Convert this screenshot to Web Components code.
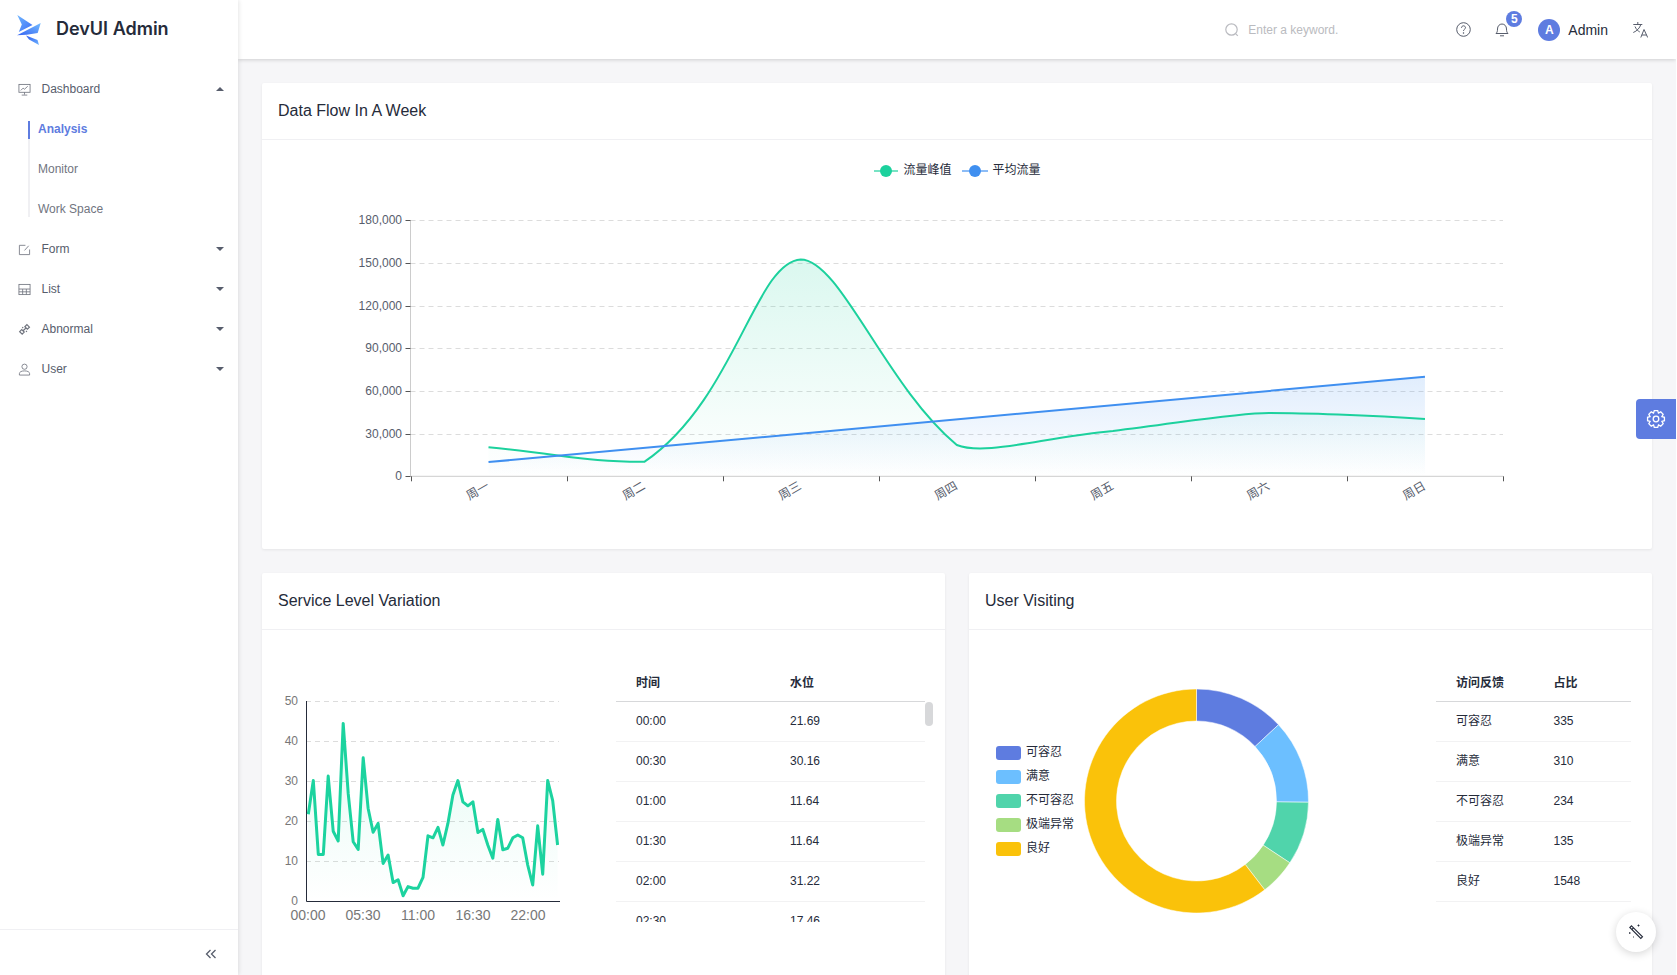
<!DOCTYPE html>
<html lang="en">
<head>
<meta charset="utf-8">
<title>DevUI Admin</title>
<style>
  html, body { margin: 0; height: 100%; overflow: hidden; background: #fff; }
  body { font-family: "Liberation Sans", "Noto Sans CJK SC", sans-serif; font-size: 12px; color: #252b3a; }
</style>
</head>
<body>
<admin-layout>
  <admin-sidebar slot="sidebar"></admin-sidebar>
  <admin-header slot="header"></admin-header>
  <dash-card title="Data Flow In A Week" wide><flow-chart></flow-chart></dash-card>
  <dash-card title="Service Level Variation">
    <level-chart></level-chart>
    <data-table id="level-table" columns="时间,水位" scroll style="width:317px;margin-top:32px"></data-table>
  </dash-card>
  <dash-card title="User Visiting">
    <visit-chart></visit-chart>
    <data-table columns="访问反馈,占比" rows="可容忍|335;满意|310;不可容忍|234;极端异常|135;良好|1548" style="width:195px;margin-top:32px"></data-table>
  </dash-card>
</admin-layout>
<settings-tab></settings-tab>
<magic-fab></magic-fab>

<script>
const ICONS = {
  dashboard: '<rect x="1" y="1.5" width="12" height="8.5" /><path d="M3 8l2.5-2.5 1.5 1.2L10.5 3.5M7 10v2.5M4 13h6"/>',
  form: '<path d="M12.5 7v5.5h-11v-10H8"/><path d="M7 8l4.5-5" />',
  list: '<rect x="1" y="1.5" width="12" height="11"/><path d="M1 6.5h12M1 9.500h12M5 6.500v6M9 6.500v6"/>',
  abnormal: '<path stroke-width="1.300" d="M1.800 9.300l2.200-2.200 2.700 2.700-2.200 2.200zM7.400 4l2.200-2.200 2.700 2.700-2.200 2.200zM5.500 8.300l2.800-2.600M4.600 4.400l1 1M8.600 8.600l1 1"/>',
  user: '<circle cx="7" cy="4" r="2.800"/><path d="M1.500 13v-1.500c0-1.800 2-3 5.500-3s5.500 1.200 5.500 3V13z"/>'
};

const LEVELS = [21.69,30.16,11.64,11.64,31.22,17.46,15,44.4,26.9,14.8,12.9,35.8,23.2,17.2,19.4,9.4,11.5,4.6,5.3,1.3,3.6,3.2,3.2,5.9,16.3,15.8,18.4,14,19.4,26.5,30.1,24.8,23.8,24.8,17.1,17.9,14,10.7,20.4,12.8,13.2,15.8,16.5,15.8,9,4,18.8,6.7,30.1,25.1,14];

const layoutTpl = document.createElement('template');
layoutTpl.innerHTML = `
  <style>
    :host { display: grid; grid-template-columns: 238px 1fr; grid-template-rows: 59px 1fr; width: 1676px; height: 100vh; background: #f6f6f8; overflow: hidden; }
    ::slotted([slot=sidebar]) { grid-row: 1 / 3; z-index: 2; }
    .main { display: grid; grid-template-columns: 1fr 1fr; gap: 24px; padding: 24px; align-content: start; overflow: hidden; min-height: 0; }
  </style>
  <slot name="sidebar"></slot>
  <slot name="header"></slot>
  <div class="main"><slot></slot></div>`;
class AdminLayout extends HTMLElement {
  constructor() {
    super();
    this.attachShadow({mode: 'open'});
    this.shadowRoot.appendChild(layoutTpl.content.cloneNode(true));
  }
}

const sidebarTpl = document.createElement('template');
sidebarTpl.innerHTML = `
  <style>
    :host { display: flex; flex-direction: column; background: #fff; box-shadow: 1px 0 4px rgba(0,0,0,.1); height: 100vh; }
    .brand { display: flex; align-items: center; height: 59px; padding-left: 17px; font-family: Inter, "Liberation Sans", sans-serif; font-size: 18px; font-weight: 600; color: #252b3a; }
    .brand svg { margin-right: 15px; }
    .brand span { margin-top: -2px; }
    nav { flex: 1; padding-top: 10px; }
    .row { display: flex; align-items: center; height: 40px; padding: 0 14px 0 18px; color: #575d6c; }
    .row svg.ic { width: 13px; height: 13px; margin-right: 10.5px; fill: none; stroke: #71757f; stroke-width: .9; }
    .row span { flex: 1; }
    .caret { width: 0; height: 0; border-left: 4px solid transparent; border-right: 4px solid transparent; border-top: 4px solid #575d6c; }
    .caret.up { border-top: 0; border-bottom: 4px solid #575d6c; }
    .sub { position: relative; }
    .sub::before { content: ""; position: absolute; left: 28px; top: 12px; width: 2px; height: 96px; background: #f0f0f3; }
    .sub div { height: 40px; line-height: 40px; padding-left: 38px; color: #71757f; }
    .sub .on { color: #5e7ce0; font-weight: 700; }
    .sub .on::before { content: ""; position: absolute; left: 28px; top: 12px; width: 2px; height: 18px; background: #5e7ce0; }
    .foot { height: 45px; border-top: 1px solid #f0f0f3; display: flex; align-items: center; justify-content: flex-end; padding-right: 21px; }
    .foot svg { margin-top: 2px; }
  </style>
  <div class="brand">
    <svg width="24" height="30" viewBox="17 14 24 30">
      <defs>
        <linearGradient id="lg1" x1="0" y1="0" x2="1" y2="1"><stop offset="0" stop-color="#6fb6ff"/><stop offset="1" stop-color="#3d6df5"/></linearGradient>
        <linearGradient id="lg2" x1="1" y1="0" x2="0" y2="1"><stop offset="0" stop-color="#74bcff"/><stop offset="1" stop-color="#3563f2"/></linearGradient>
        <linearGradient id="lg3" x1="0" y1="0" x2="1" y2="1"><stop offset="0" stop-color="#2f5cf0"/><stop offset="1" stop-color="#6fb4ff"/></linearGradient>
      </defs>
      <path d="M17.300 14l15.200 10-13.700 7 3-7.500z" fill="url(#lg1)"/>
      <path d="M40.700 22l-3 10-11 1.800-9.600.4z" fill="url(#lg2)"/>
      <path d="M26 34.500l11.500 4.500 1.500 5-10-5.500z" fill="url(#lg3)"/>
    </svg>
    <span>DevUI Admin</span>
  </div>
  <nav>
    <div class="row"><svg class="ic" viewBox="0 0 14 14">${ICONS.dashboard}</svg><span>Dashboard</span><i class="caret up"></i></div>
    <div class="sub"><div class="on">Analysis</div><div>Monitor</div><div>Work Space</div></div>
    <div class="row"><svg class="ic" viewBox="0 0 14 14">${ICONS.form}</svg><span>Form</span><i class="caret"></i></div>
    <div class="row"><svg class="ic" viewBox="0 0 14 14">${ICONS.list}</svg><span>List</span><i class="caret"></i></div>
    <div class="row"><svg class="ic" viewBox="0 0 14 14">${ICONS.abnormal}</svg><span>Abnormal</span><i class="caret"></i></div>
    <div class="row"><svg class="ic" viewBox="0 0 14 14">${ICONS.user}</svg><span>User</span><i class="caret"></i></div>
  </nav>
  <div class="foot">
    <svg width="12" height="10" viewBox="0 0 12 10" fill="none" stroke="#575d6c" stroke-width="1.300"><path d="M5.500 1L1.500 5l4 4M10.500 1l-4 4 4 4"/></svg>
  </div>`;
class AdminSidebar extends HTMLElement {
  constructor() {
    super();
    this.attachShadow({mode: 'open'});
    this.shadowRoot.appendChild(sidebarTpl.content.cloneNode(true));
  }
}

const headerTpl = document.createElement('template');
headerTpl.innerHTML = `
  <style>
    :host { display: flex; align-items: center; justify-content: flex-end; background: #fff; box-shadow: 0 1px 4px rgba(0,0,0,.16); z-index: 1; padding-right: 28px; }
    svg { display: block; fill: none; stroke: #575d6c; stroke-width: 1; }
    .search { display: flex; align-items: center; gap: 9px; color: #babbc0; width: 231px; }
    .search svg { stroke: #babbc0; stroke-width: 1.200; }
    .help { margin-right: 24px; }
    .bell { position: relative; margin-right: 29px; }
    .badge { position: absolute; left: 11px; top: -11px; width: 16px; height: 16px; line-height: 16px; border-radius: 50%; background: #5e7ce0; color: #fff; font-size: 12px; font-weight: 700; text-align: center; }
    .avatar { width: 22px; height: 22px; line-height: 22px; border-radius: 50%; background: #5e7ce0; color: #fff; font-weight: 700; text-align: center; margin-right: 8px; }
    .name { font-size: 14px; margin-right: 25px; color: #252b3a; }
  </style>
  <div class="search">
    <svg width="14" height="14" viewBox="0 0 14 14"><circle cx="6.500" cy="6.500" r="5.700"/><path d="M10.800 10.800l2 2"/></svg>
    <span>Enter a keyword.</span>
  </div>
  <svg class="help" width="15" height="15" viewBox="0 0 15 15"><circle cx="7.500" cy="7.500" r="6.800"/><path d="M5.500 5.800c0-1.200 1-2 2-2s2 .8 2 1.900c0 1.500-2 1.500-2 3.200"/><circle cx="7.500" cy="11" r=".4"/></svg>
  <div class="bell">
    <svg width="14" height="15" viewBox="0 0 14 15"><path d="M1 11.500h12c-1-1-1.500-2-1.500-4.500 0-3-2-5-4.500-5S2.500 4 2.500 7c0 2.500-.5 3.500-1.500 4.500zM5 13.800h4"/></svg>
    <div class="badge">5</div>
  </div>
  <div class="avatar">A</div>
  <div class="name">Admin</div>
  <svg width="15" height="17" viewBox="0 0 15 17"><path d="M.3 3.500h9M4.800 1v2.500M7.800 3.500C6.800 7 4 10 .3 11.500M2 5.500c1 2.500 3 4.500 4.800 5.500M7.800 16.500l3.200-8 3.700 8M8.800 14h4.900"/></svg>`;
class AdminHeader extends HTMLElement {
  constructor() {
    super();
    this.attachShadow({mode: 'open'});
    this.shadowRoot.appendChild(headerTpl.content.cloneNode(true));
  }
}

const cardTpl = document.createElement('template');
cardTpl.innerHTML = `
  <style>
    :host { display: block; background: #fff; border-radius: 2px; box-shadow: 0 1px 3px rgba(0,0,0,.07); }
    :host([wide]) { grid-column: 1 / 3; }
    header { height: 56px; line-height: 55px; padding-left: 16px; font-size: 16px; color: #252b3a; border-bottom: 1px solid #f0f0f3; }
    .body { display: flex; align-items: flex-start; }
  </style>
  <header id="title"></header>
  <div class="body"><slot></slot></div>`;
class DashCard extends HTMLElement {
  constructor() {
    super();
    this.attachShadow({mode: 'open'});
    this.shadowRoot.appendChild(cardTpl.content.cloneNode(true));
  }
  connectedCallback() {
    this.shadowRoot.getElementById('title').textContent = this.getAttribute('title');
    this.removeAttribute('title');
  }
}

class FlowChart extends HTMLElement {
  constructor() {
    super();
    this.attachShadow({mode: 'open'});
  }
  connectedCallback() {
    const x0 = 410.5, step = 156.07, yb = 476.3, h = 256;
    const days = ['周一','周二','周三','周四','周五','周六','周日'];
    const yOf = v => yb - v / 180000 * h;
    // read off the reference, the peak curve is not a plain spline
    const gd = 'M488.5 447.3C566 454.600 585 462 644.600 461.700C735 400 755 262 800.700 259.400C840 259.400 885 385 956.800 445C985 456 1040 438 1112.900 431C1180 423 1235 413 1269 413C1300 413 1370 415 1425 419';
    const bd = 'M' + [10000, 70000].map((v, i) => (x0 + step * (i * 6 + .5)) + ' ' + yOf(v)).join('L');
    let s = '';
    [0,30000,60000,90000,120000,150000,180000].forEach(v => {
      const y = Math.round(yOf(v)) + .5;
      if (v) s += `<path d="M${x0} ${y}H1503" stroke="#dcdcdc" stroke-dasharray="5 4"/>`;
      s += `<path d="M${x0 - 5} ${y}H${x0}" stroke="#555"/>`;
      s += `<text x="402" y="${y}" text-anchor="end" dominant-baseline="middle" class="lb">${v.toLocaleString('en-US')}</text>`;
    });
    for (let i = 0; i <= 7; i++) {
      const x = Math.round(x0 + step * i) + .5;
      s += `<path d="M${x} ${yb}v5" stroke="#555"/>`;
    }
    days.forEach((d, i) => {
      s += `<text transform="translate(${x0 + step * (i + .5)} 485.5) rotate(-30)" text-anchor="end" dominant-baseline="middle" class="lb">${d}</text>`;
    });
    const area = d => `${d}L1425 ${yb}L488.5 ${yb}Z`;
    this.shadowRoot.innerHTML = `
      <style>
        :host { display: block; width: 1390px; height: 409px; }
        svg { display: block; }
        .lb { font-size: 12px; fill: #575d6c; }
        .lg { font-size: 12px; fill: #252b3a; }
      </style>
      <svg width="1390" height="409" viewBox="262 140 1390 409">
        <defs>
          <linearGradient id="ga" x1="0" y1="0" x2="0" y2="1"><stop offset="0" stop-color="#1cd19d" stop-opacity=".16"/><stop offset="1" stop-color="#1cd19d" stop-opacity="0"/></linearGradient>
          <linearGradient id="ba" x1="0" y1="0" x2="0" y2="1"><stop offset="0" stop-color="#3f8ff0" stop-opacity=".16"/><stop offset="1" stop-color="#3f8ff0" stop-opacity="0"/></linearGradient>
        </defs>
        <path d="M${x0} 220V${yb}H1503" fill="none" stroke="#ccc"/>
        ${s}
        <path d="${area(gd)}" fill="url(#ga)"/>
        <path d="${area(bd)}" fill="url(#ba)"/>
        <path d="${gd}" fill="none" stroke="#1cd19d" stroke-width="2"/>
        <path d="${bd}" fill="none" stroke="#3f8ff0" stroke-width="2"/>
        <path d="M874 171h24" stroke="#1cd19d" stroke-opacity=".6" stroke-width="2"/><circle cx="886" cy="171" r="6" fill="#1cd19d"/>
        <text x="903.500" y="171" dominant-baseline="middle" class="lg">流量峰值</text>
        <path d="M962 171h26" stroke="#3f8ff0" stroke-opacity=".6" stroke-width="2"/><circle cx="975" cy="171" r="6" fill="#3f8ff0"/>
        <text x="992.500" y="171" dominant-baseline="middle" class="lg">平均流量</text>
      </svg>`;
  }
}

class LevelChart extends HTMLElement {
  constructor() {
    super();
    this.attachShadow({mode: 'open'});
  }
  connectedCallback() {
    const yb = 901, pts = LEVELS.map((v, i) => [308.3 + i * 4.987, yb - v * 4]);
    const line = 'M' + pts.map(p => p.map(n => n.toFixed(1)).join(' ')).join('L');
    let s = '';
    [0,10,20,30,40,50].forEach(v => {
      const y = yb - v * 4;
      if (v) s += `<path d="M306 ${y + .5}H559" stroke="#dcdcdc" stroke-dasharray="5 4"/>`;
      s += `<text x="298" y="${y + .5}" text-anchor="end" dominant-baseline="middle" class="y">${v}</text>`;
    });
    ['00:00','05:30','11:00','16:30','22:00'].forEach((t, i) => {
      s += `<text x="${308 + i * 55}" y="916" text-anchor="middle" dominant-baseline="middle" class="x">${t}</text>`;
    });
    this.shadowRoot.innerHTML = `
      <style>
        :host { display: block; flex: none; width: 354px; height: 400px; }
        svg { display: block; }
        .y { font-size: 12px; fill: #777; }
        .x { font-size: 14px; fill: #777; }
      </style>
      <svg width="354" height="400" viewBox="262 630 354 400">
        <defs><linearGradient id="la" x1="0" y1="0" x2="0" y2="1"><stop offset="0" stop-color="#1cd39f" stop-opacity=".12"/><stop offset="1" stop-color="#1cd39f" stop-opacity="0"/></linearGradient></defs>
        ${s}
        <path d="${line}L${pts[50][0]} ${yb}L${pts[0][0]} ${yb}Z" fill="url(#la)"/>
        <path d="M306.500 701V901.500H560" fill="none" stroke="#252b3a"/>
        <path d="${line}" fill="none" stroke="#1cd39f" stroke-width="3" stroke-linejoin="round"/>
      </svg>`;
  }
}

class VisitChart extends HTMLElement {
  constructor() {
    super();
    this.attachShadow({mode: 'open'});
  }
  connectedCallback() {
    const segs = [['可容忍',335,'#5e7ce0'],['满意',310,'#6cbfff'],['不可容忍',234,'#50d4ab'],['极端异常',135,'#a6dd82'],['良好',1548,'#fac20a']];
    const total = segs.reduce((a, b) => a + b[1], 0);
    const cx = 1196.5, cy = 801, R = 112, r = 80;
    const pt = (rad, a) => (cx + rad * Math.sin(a)).toFixed(2) + ' ' + (cy - rad * Math.cos(a)).toFixed(2);
    let a = 0, s = '';
    segs.forEach((seg, i) => {
      const b = a + seg[1] / total * Math.PI * 2, big = b - a > Math.PI ? 1 : 0;
      s += `<path d="M${pt(R, a)}A${R} ${R} 0 ${big} 1 ${pt(R, b)}L${pt(r, b)}A${r} ${r} 0 ${big} 0 ${pt(r, a)}Z" fill="${seg[2]}" stroke="#fff" stroke-width=".5"/>`;
      const y = 746 + i * 24;
      s += `<rect x="996" y="${y}" width="25" height="14" rx="3" fill="${seg[2]}"/>`;
      s += `<text x="1026" y="${y + 7}" dominant-baseline="middle" class="lg">${seg[0]}</text>`;
      a = b;
    });
    this.shadowRoot.innerHTML = `
      <style>
        :host { display: block; flex: none; width: 467px; height: 400px; }
        svg { display: block; }
        .lg { font-size: 12px; fill: #252b3a; }
      </style>
      <svg width="467" height="400" viewBox="969 630 467 400">${s}</svg>`;
  }
}

const tableTpl = document.createElement('template');
tableTpl.innerHTML = `
  <style>
    :host { display: block; flex: none; }
    .row { display: grid; grid-template-columns: 1fr 1fr; height: 40px; line-height: 39px; box-sizing: border-box; border-bottom: 1px solid #f2f2f3; }
    :host([scroll]) .row { grid-template-columns: 154px 1fr; }
    .row div { padding-left: 20px; }
    .head { font-weight: 700; line-height: 42px; border-bottom-color: #d7d8da; }
    :host([scroll]) .head, :host([scroll]) .body { margin-right: 8px; }
    .wrap { position: relative; }
    .body { height: 220px; overflow: hidden; }
    .thumb { display: none; position: absolute; right: 0; top: 0; width: 8px; height: 24px; border-radius: 4px; background: #d7d8da; }
    :host([scroll]) .thumb { display: block; }
  </style>
  <div class="row head" id="head"></div>
  <div class="wrap"><div class="body" id="body"></div><div class="thumb"></div></div>`;
class DataTable extends HTMLElement {
  constructor() {
    super();
    this.attachShadow({mode: 'open'});
    this.shadowRoot.appendChild(tableTpl.content.cloneNode(true));
  }
  connectedCallback() {
    this.shadowRoot.getElementById('head').innerHTML = this.getAttribute('columns').split(',').map(c => `<div>${c}</div>`).join('');
    if (this.getAttribute('rows')) this.rows = this.getAttribute('rows').split(';').map(r => r.split('|'));
  }
  set rows(list) {
    this.shadowRoot.getElementById('body').innerHTML = list.map(r => `<div class="row">${r.map(c => `<div>${c}</div>`).join('')}</div>`).join('');
  }
}

const tabTpl = document.createElement('template');
tabTpl.innerHTML = `
  <style>
    :host { position: fixed; left: 1636px; top: 399px; width: 40px; height: 40px; background: #5e7ce0; border-radius: 4px 0 0 4px; display: flex; align-items: center; justify-content: center; }
  </style>
  <svg width="20" height="20" viewBox="0 0 20 20" fill="none" stroke="#fff" stroke-width="1.300"><path id="gear"/><circle cx="10" cy="10" r="2.800"/></svg>`;
class SettingsTab extends HTMLElement {
  constructor() {
    super();
    this.attachShadow({mode: 'open'});
    this.shadowRoot.appendChild(tabTpl.content.cloneNode(true));
  }
  connectedCallback() {
    let d = '';
    for (let i = 0; i < 8; i++) {
      const t = i * Math.PI / 4;
      [[-.2, 8.6], [.2, 8.6], [.39, 6.4]].forEach(([o, rad], k) => {
        const p = [10 + rad * Math.cos(t + o), 10 + rad * Math.sin(t + o)];
        d += (i === 0 && k === 0 ? 'M' : 'L') + p[0].toFixed(2) + ' ' + p[1].toFixed(2);
      });
    }
    this.shadowRoot.getElementById('gear').setAttribute('d', d + 'Z');
  }
}

const fabTpl = document.createElement('template');
fabTpl.innerHTML = `
  <style>
    :host { position: fixed; left: 1616px; top: 912px; width: 40px; height: 40px; border-radius: 50%; background: #fff; box-shadow: 0 2px 8px rgba(0,0,0,.16); display: flex; align-items: center; justify-content: center; }
  </style>
  <svg width="18" height="18" viewBox="0 0 18 18" fill="none" stroke="#252b3a" stroke-width="1.100"><path d="M4.500 2.800l11 11-1.700 1.700-11-11zM6.500 4.800L4.800 6.500"/><path d="M10.500 2.500h2M11.500 1.500v2M2 10h1.500M2.700 9.300v1.500M6 14h1" stroke-width=".9"/></svg>`;
class MagicFab extends HTMLElement {
  constructor() {
    super();
    this.attachShadow({mode: 'open'});
    this.shadowRoot.appendChild(fabTpl.content.cloneNode(true));
  }
}

customElements.define('admin-layout', AdminLayout);
customElements.define('admin-sidebar', AdminSidebar);
customElements.define('admin-header', AdminHeader);
customElements.define('dash-card', DashCard);
customElements.define('flow-chart', FlowChart);
customElements.define('level-chart', LevelChart);
customElements.define('visit-chart', VisitChart);
customElements.define('data-table', DataTable);
customElements.define('settings-tab', SettingsTab);
customElements.define('magic-fab', MagicFab);

document.getElementById('level-table').rows = LEVELS.slice(0, 6).map((v, i) => {
  const t = String(Math.floor(i / 2)).padStart(2, '0') + (i % 2 ? ':30' : ':00');
  return [t, v.toFixed(2)];
});
</script>
</body>
</html>
